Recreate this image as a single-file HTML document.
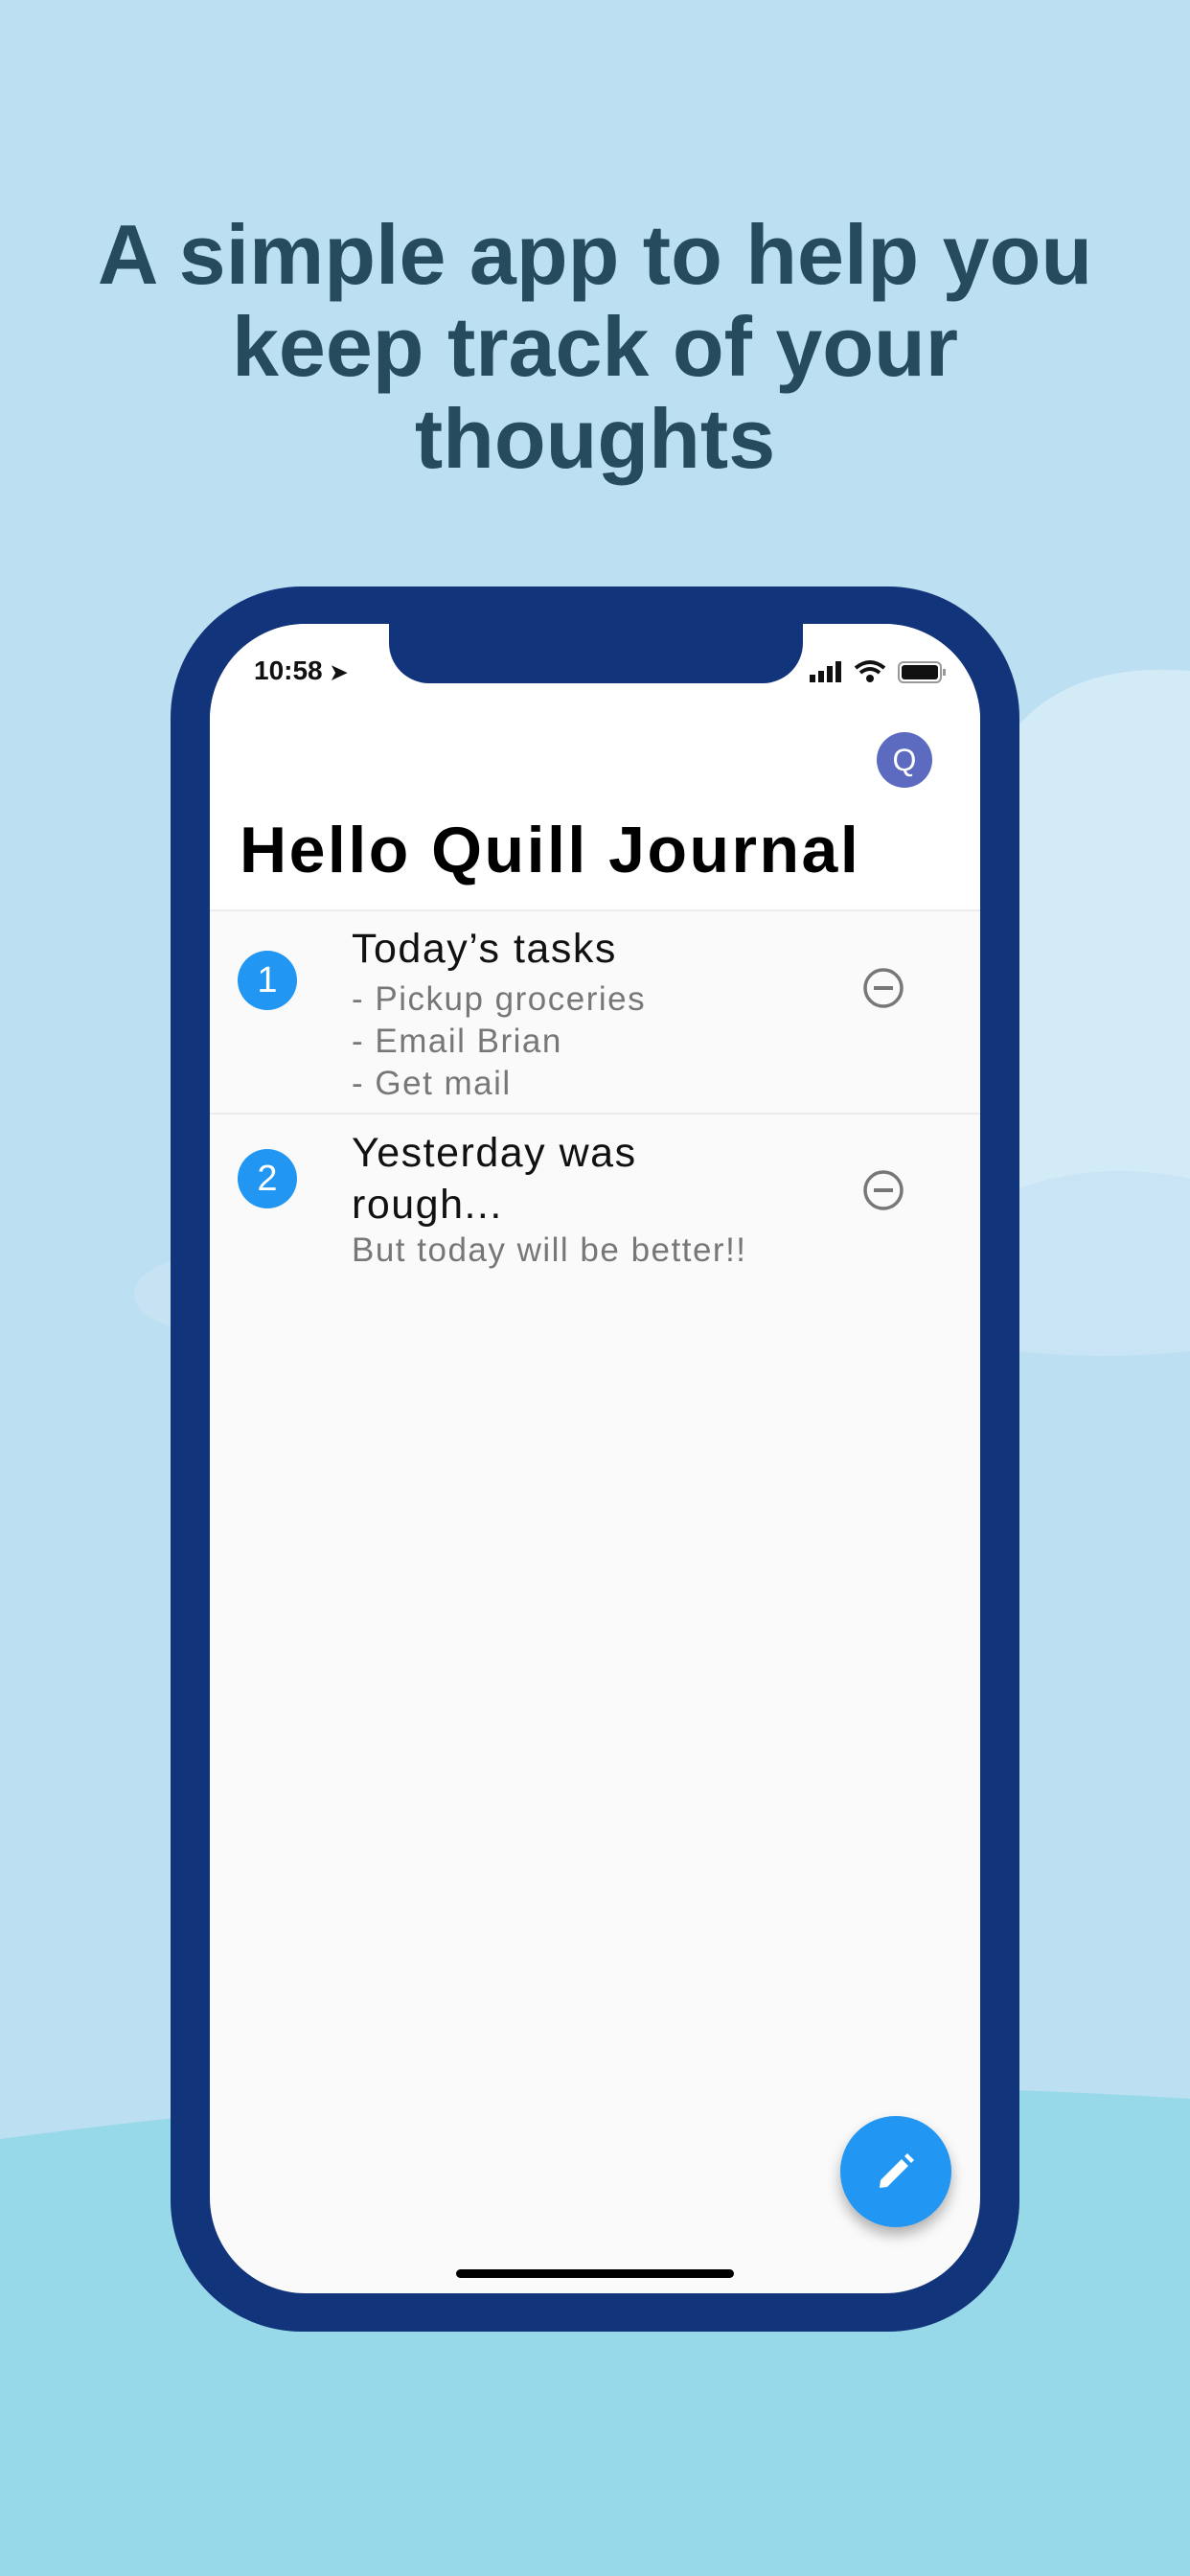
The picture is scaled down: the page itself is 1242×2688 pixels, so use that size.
<!DOCTYPE html>
<html><head><meta charset="utf-8"><style>
*{margin:0;padding:0;box-sizing:border-box}
body{width:1242px;height:2688px;overflow:hidden;background:#bddff2;position:relative;font-family:"Liberation Sans",sans-serif}
.abs{position:absolute}
h1{position:absolute;left:0;width:1242px;top:218px;text-align:center;font-size:88px;line-height:96px;font-weight:bold;color:#264a5e}
.phone{left:178px;top:612px;width:886px;height:1821px;background:#12347a;border-radius:137px}
.screen{left:219px;top:651px;width:804px;height:1742px;background:#fafafa;border-radius:100px;overflow:hidden}
.notch{left:406px;top:640px;width:432px;height:73px;background:#12347a;border-radius:0 0 42px 42px}
.t{color:#111;font-size:43px;left:367px;letter-spacing:1.5px}
.s{color:#777;font-size:35px;left:367px;letter-spacing:1.5px}
.num{width:62px;height:62px;border-radius:50%;background:#2196f3;color:#fff;font-size:38px;text-align:center;line-height:62px}
</style></head><body>
<svg class="abs" style="left:0;top:0" width="1242" height="2688">
<path d="M1060 760 Q1120 690 1242 700 L1242 1400 Q1150 1420 1064 1410 Z" fill="#d3eaf7"/>
<path d="M1064 1240 Q1150 1210 1242 1230 L1242 1410 Q1150 1420 1064 1410Z" fill="#c9e4f4"/>
<ellipse cx="220" cy="1350" rx="80" ry="40" fill="#c6e2f3"/>
<path d="M0 2232 Q600 2150 1242 2190 L1242 2688 L0 2688Z" fill="#98d9e9"/>
</svg>
<h1>A simple app to help you<br>keep track of your<br>thoughts</h1>
<div class="abs phone"></div>
<div class="abs screen">
 <div class="abs" style="left:0;top:0;width:804px;height:300px;background:#fff"></div>
 <div class="abs" style="left:0;top:298px;width:804px;height:2px;background:#ececec"></div>
 <div class="abs" style="left:0;top:510px;width:804px;height:2px;background:#ececec"></div>
</div>
<div class="abs notch"></div>
<div class="abs" style="left:265px;top:684px;font-size:28px;font-weight:bold;color:#111">10:58 <span style="font-size:22px">➤</span></div>
<svg class="abs" style="left:843px;top:686px" width="150" height="32">
<rect x="2" y="18" width="6" height="8" fill="#111"/><rect x="11" y="14" width="6" height="12" fill="#111"/><rect x="20" y="9" width="6" height="17" fill="#111"/><rect x="29" y="4" width="6" height="22" fill="#111"/>
<path d="M50 11 Q65 -1 80 11" stroke="#111" stroke-width="4" fill="none"/><path d="M55 16 Q65 8 75 16" stroke="#111" stroke-width="4" fill="none"/><circle cx="65" cy="22" r="4" fill="#111"/>
<rect x="95" y="5" width="44" height="21" rx="5" fill="none" stroke="#999" stroke-width="2"/><rect x="98" y="8" width="38" height="15" rx="3" fill="#111"/><rect x="141" y="12" width="3" height="7" fill="#999"/>
</svg>
<div class="abs" style="left:915px;top:764px;width:58px;height:58px;border-radius:50%;background:#5c6bc0;color:#fff;font-size:32px;text-align:center;line-height:58px">Q</div>
<div class="abs" style="left:250px;top:848px;font-size:68px;font-weight:bold;color:#000;letter-spacing:2.5px">Hello Quill Journal</div>
<div class="abs num" style="left:248px;top:992px">1</div>
<div class="abs t" style="top:966px">Today’s tasks</div>
<div class="abs s" style="top:1021px;line-height:44px">- Pickup groceries<br>- Email Brian<br>- Get mail</div>
<div class="abs num" style="left:248px;top:1199px">2</div>
<div class="abs t" style="top:1176px;line-height:54px">Yesterday was<br>rough...</div>
<div class="abs s" style="top:1285px">But today will be better!!</div>
<svg class="abs" style="left:899px;top:1008px" width="46" height="46"><circle cx="23" cy="23" r="19" stroke="#777" stroke-width="3.5" fill="none"/><rect x="13" y="21" width="20" height="4" fill="#777"/></svg>
<svg class="abs" style="left:899px;top:1219px" width="46" height="46"><circle cx="23" cy="23" r="19" stroke="#777" stroke-width="3.5" fill="none"/><rect x="13" y="21" width="20" height="4" fill="#777"/></svg>
<div class="abs" style="left:877px;top:2208px;width:116px;height:116px;border-radius:50%;background:#2196f3;box-shadow:0 8px 14px rgba(0,0,0,.3)"></div>
<svg class="abs" style="left:907px;top:2238px" width="56" height="56"><path d="M11 45 L12 37 L34 15 L41 22 L19 44Z M37 12 L40 9 L47 16 L44 19Z" fill="#fff"/></svg>
<div class="abs" style="left:476px;top:2368px;width:290px;height:9px;border-radius:5px;background:#000"></div>
</body></html>
